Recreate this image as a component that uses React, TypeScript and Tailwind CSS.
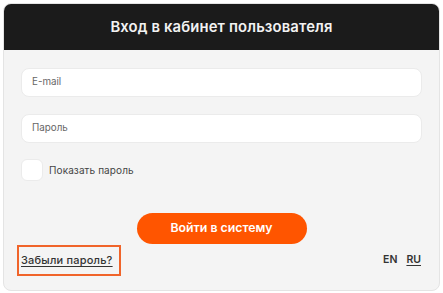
import React from "react";

export default function App() {
  return (
    <div className="w-[443px] h-[293px] bg-white p-[3px] pb-[2px] pr-[3px]" style={{ fontFamily: "Inter, 'Noto Sans', sans-serif" }}>
      <div className="w-[437px] h-[288px] rounded-[8px] overflow-hidden bg-[#f4f4f4] border border-[#e4e4e4] flex flex-col">
        <div className="h-[46px] bg-[#1b1b1b] flex items-center justify-center shrink-0">
          <span className="text-[#f2f2f2] text-[14.8px] font-semibold tracking-[0.15px]">Вход в кабинет пользователя</span>
        </div>
        <div className="flex flex-col px-[17px] pt-[18px]">
          <div className="h-[29px] bg-white rounded-[8px] border border-[#ebebeb] flex items-center pl-[10px] text-[9.8px] text-[#666]">E-mail</div>
          <div className="h-[29px] mt-[17px] bg-white rounded-[8px] border border-[#ebebeb] flex items-center pl-[10px] text-[9.8px] text-[#666]">Пароль</div>
          <div className="flex items-center mt-[16px] gap-[6px]">
            <div className="w-[22px] h-[22px] bg-white rounded-[6px] border border-[#ebebeb]" />
            <span className="text-[10px] text-[#444] tracking-[0.1px]">Показать пароль</span>
          </div>
          <div className="flex justify-center mt-[32px]">
            <div className="w-[170px] h-[31px] rounded-full bg-[#ff5500] flex items-center justify-center text-white text-[12.3px] font-semibold">Войти в систему</div>
          </div>
          <div className="flex items-center justify-between">
            <div className="border-2 border-[#f0642a] h-[31px] w-[104px] -ml-[4px] flex items-center pl-[2px] mt-[1px]">
              <span className="text-[11px] font-medium text-[#333] underline underline-offset-2 tracking-[0.2px]">Забыли пароль?</span>
            </div>
            <div className="flex gap-[9px] text-[10.5px] font-semibold text-[#333] pr-[1px]">
              <span>EN</span>
              <span className="underline underline-offset-2">RU</span>
            </div>
          </div>
        </div>
      </div>
    </div>
  );
}
